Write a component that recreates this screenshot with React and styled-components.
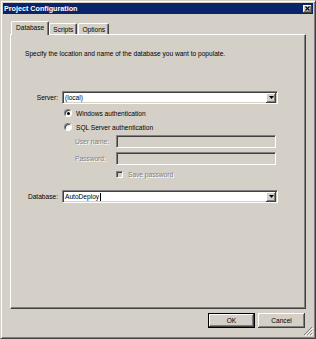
import { createGlobalStyle, styled } from "styled-components";

const GlobalStyle = createGlobalStyle`
    html, body {
        margin: 0;
        padding: 0;
        background: #d4d0c8;
    }
    body {
        font-family: "Liberation Sans", Arial, sans-serif;
        font-size: 6.6px;
        color: #000;
    }
`

const Window = styled.div`
    position: relative;
    box-sizing: border-box;
    width: 316px;
    height: 339px;
    background: #d4d0c8;
    border: 1px solid;
    border-color: #d4d0c8 #404040 #404040 #d4d0c8;
    box-shadow: inset 1px 1px #fff, inset -1px -1px #808080;
    padding: 2px;
    display: flex;
    flex-direction: column;
`

const TitleBar = styled.div`
    height: 11px;
    background: #0a246a;
    display: flex;
    align-items: center;
    justify-content: space-between;
    padding: 0 1px;
`

const Title = styled.span`
    color: #fff;
    font-weight: bold;
    font-size: 7.2px;
    line-height: 11px;
`

const CloseButton = styled.div`
    width: 9px;
    height: 8px;
    background: #d4d0c8;
    box-shadow: inset -1px -1px #404040, inset 1px 1px #fff, inset -2px -2px #808080;
    display: flex;
    align-items: center;
    justify-content: center;
`

const Body = styled.div`
    flex: 1;
    display: flex;
    flex-direction: column;
    padding: 7px 7px 0 7px;
`

const TabStrip = styled.div`
    display: flex;
    align-items: flex-end;
    padding-left: 1px;
    margin-bottom: -1px;
    position: relative;
    z-index: 1;
`

const Tab = styled.div`
    box-sizing: border-box;
    background: #d4d0c8;
    border-top: 1px solid #fff;
    border-left: 1px solid #fff;
    border-right: 1px solid #404040;
    border-radius: 2px 2px 0 0;
    box-shadow: inset -1px 0 #808080;
    display: flex;
    align-items: center;
    justify-content: center;
    ${props => props.active ? `
        height: 14px;
        padding: 0 4px 2px 4px;
        margin-right: -1px;
    ` : `
        height: 11px;
        margin-bottom: 1px;
        padding: 0 3px;
        margin-left: 1px;
    `}
`

const Panel = styled.div`
    box-sizing: border-box;
    height: 275px;
    border-top: 1px solid #fff;
    border-left: 1px solid #fff;
    border-right: 1px solid #404040;
    border-bottom: 1px solid #404040;
    box-shadow: inset -1px -1px #808080;
    padding: 15px 0 0 14px;
    display: flex;
    flex-direction: column;
`

const Description = styled.div`
    line-height: 8px;
`

const Row = styled.div`
    display: grid;
    grid-template-columns: 33px 216px;
    column-gap: 4px;
    align-items: center;
    margin-top: ${props => props.top || 0}px;
`

const Label = styled.div`
    text-align: right;
    white-space: nowrap;
`

const Combo = styled.div`
    box-sizing: border-box;
    height: 13px;
    background: #fff;
    border-top: 1px solid #808080;
    border-left: 1px solid #808080;
    border-right: 1px solid #fff;
    border-bottom: 1px solid #fff;
    box-shadow: inset 1px 1px #404040, inset -1px -1px #d4d0c8;
    display: flex;
    align-items: center;
    padding: 1px 1px 1px 2px;
`

const ComboText = styled.div`
    flex: 1;
    display: flex;
    align-items: center;
    line-height: 9px;
`

const Caret = styled.span`
    display: inline-block;
    width: 1px;
    height: 8px;
    background: #000;
    margin-left: 1px;
`

const DropButton = styled.div`
    width: 10px;
    height: 10px;
    background: #d4d0c8;
    box-shadow: inset -1px -1px #404040, inset 1px 1px #fff, inset -2px -2px #808080;
    display: flex;
    align-items: center;
    justify-content: center;
`

const Options = styled.div`
    grid-column: 2;
    display: flex;
    flex-direction: column;
    padding-left: 2px;
`

const OptionRow = styled.div`
    display: flex;
    align-items: center;
    height: 10px;
    margin-top: ${props => props.top || 0}px;
`

const Radio = styled.div`
    position: relative;
    box-sizing: border-box;
    width: 8px;
    height: 8px;
    border-radius: 50%;
    background: #fff;
    border: 1px solid;
    border-color: #808080 #fff #fff #808080;
    box-shadow: inset 1px 1px #404040;
    margin-right: 4px;
    ${props => props.checked && `
        &::after {
            content: "";
            position: absolute;
            left: 2px;
            top: 2px;
            width: 3px;
            height: 3px;
            border-radius: 50%;
            background: #000;
        }
    `}
`

const SubGrid = styled.div`
    grid-column: 2;
    display: grid;
    grid-template-columns: 37px 160px;
    column-gap: 4px;
    row-gap: 4px;
    align-items: center;
    margin: 3px 0 0 13px;
`

const DisabledLabel = styled.div`
    color: #808080;
    text-shadow: 1px 1px #fff;
    white-space: nowrap;
`

const TextBox = styled.div`
    box-sizing: border-box;
    height: 13px;
    background: ${props => props.disabled ? "#d4d0c8" : "#fff"};
    border-top: 1px solid #808080;
    border-left: 1px solid #808080;
    border-right: 1px solid #fff;
    border-bottom: 1px solid #fff;
    box-shadow: inset 1px 1px #404040, inset -1px -1px #d4d0c8;
`

const CheckRow = styled.div`
    grid-column: 2;
    display: flex;
    align-items: center;
    height: 8px;
    margin-top: 1px;
`

const CheckBox = styled.div`
    box-sizing: border-box;
    width: 7px;
    height: 7px;
    background: #d4d0c8;
    border: 1px solid;
    border-color: #808080 #fff #fff #808080;
    box-shadow: inset 1px 1px #404040;
    margin-right: 5px;
`

const Footer = styled.div`
    display: flex;
    justify-content: flex-end;
    gap: 3px;
    padding: 4px 1px 0 0;
`

const Button = styled.div`
    box-sizing: border-box;
    width: 47px;
    height: 15px;
    background: #d4d0c8;
    display: flex;
    align-items: center;
    justify-content: center;
    box-shadow: inset -1px -1px #404040, inset 1px 1px #fff, inset -2px -2px #808080;
    ${props => props.isDefault && `
        border: 1px solid #000;
    `}
`

const Grip = styled.div`
    position: absolute;
    right: 2px;
    bottom: 2px;
    width: 10px;
    height: 10px;
`

function DropArrow() {
    return (
        <DropButton>
            <svg width="5" height="3" viewBox="0 0 5 3">
                <path d="M0 0 H5 L2.5 3 Z" fill="#000" />
            </svg>
        </DropButton>
    )
}

export default function App() {
    return (
        <>
            <GlobalStyle />
            <Window>
                <TitleBar>
                    <Title>Project Configuration</Title>
                    <CloseButton>
                        <svg width="5" height="5" viewBox="0 0 5 5">
                            <path d="M0.5 0.5 L4.5 4.5 M4.5 0.5 L0.5 4.5" stroke="#000" strokeWidth="1.1" />
                        </svg>
                    </CloseButton>
                </TitleBar>
                <Body>
                    <TabStrip>
                        <Tab active>Database</Tab>
                        <Tab>Scripts</Tab>
                        <Tab>Options</Tab>
                    </TabStrip>
                    <Panel>
                        <Description>Specify the location and name of the database you want to populate.</Description>
                        <Row top={33}>
                            <Label>Server:</Label>
                            <Combo>
                                <ComboText>(local)</ComboText>
                                <DropArrow />
                            </Combo>
                            <Options>
                                <OptionRow top={4}>
                                    <Radio checked />
                                    Windows authentication
                                </OptionRow>
                                <OptionRow top={4}>
                                    <Radio />
                                    SQL Server authentication
                                </OptionRow>
                            </Options>
                        </Row>
                        <Row>
                            <SubGrid>
                                <DisabledLabel>User name:</DisabledLabel>
                                <TextBox disabled />
                                <DisabledLabel>Password:</DisabledLabel>
                                <TextBox disabled />
                                <CheckRow>
                                    <CheckBox />
                                    <DisabledLabel>Save password</DisabledLabel>
                                </CheckRow>
                            </SubGrid>
                        </Row>
                        <Row top={12}>
                            <Label>Database:</Label>
                            <Combo>
                                <ComboText>AutoDeploy<Caret /></ComboText>
                                <DropArrow />
                            </Combo>
                        </Row>
                    </Panel>
                    <Footer>
                        <Button isDefault>OK</Button>
                        <Button>Cancel</Button>
                    </Footer>
                </Body>
                <Grip>
                    <svg width="10" height="10" viewBox="0 0 10 10">
                        <path d="M9 1 L1 9 M9 4 L4 9 M9 7 L7 9" stroke="#808080" strokeWidth="1" />
                        <path d="M10 2 L2 10 M10 5 L5 10 M10 8 L8 10" stroke="#fff" strokeWidth="1" />
                    </svg>
                </Grip>
            </Window>
        </>
    );
}
